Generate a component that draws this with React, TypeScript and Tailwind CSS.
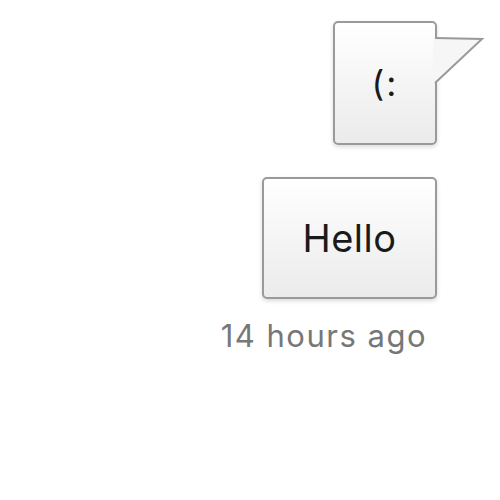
import React from "react";

export default function App() {
  return (
    <div className="w-[500px] h-[500px] bg-white flex flex-col items-end pr-[63px] pt-[21px]" style={{ fontFamily: 'Inter, "Liberation Sans", Arial, sans-serif' }}>
      <div className="relative">
        <div className="w-[104px] h-[124px] rounded-[5px] border-2 border-[#9a9a9a] bg-gradient-to-b from-white to-[#ebebeb] shadow-[0_2px_4px_rgba(0,0,0,0.15)] flex items-center justify-center text-[35px] tracking-[2px] text-[#1a1a1a] leading-none">
          (:
        </div>
        <svg className="absolute left-[100px] top-[15px]" width="52" height="50" viewBox="0 0 52 50">
          <path d="M0 2 L50 3 L4 47 L0 47 Z" fill="#f6f6f6" />
          <path d="M2 2 L49 3 L2 47" fill="none" stroke="#9a9a9a" strokeWidth="2" strokeLinejoin="miter" />
        </svg>
      </div>
      <div className="mt-[32px] w-[175px] h-[122px] rounded-[5px] border-2 border-[#9a9a9a] bg-gradient-to-b from-white to-[#ebebeb] shadow-[0_2px_4px_rgba(0,0,0,0.15)] flex items-center justify-center text-[38px] tracking-[0.5px] text-[#1a1a1a] leading-none">
        Hello
      </div>
      <div className="mt-[21px] mr-[10px] text-[31px] tracking-[1.5px] text-[#777] leading-none">14 hours ago</div>
    </div>
  );
}
